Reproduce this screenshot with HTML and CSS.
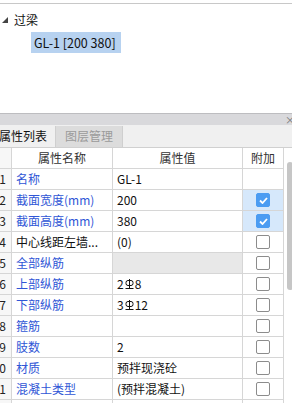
FILE: index.html
```html
<!DOCTYPE html>
<html lang="zh">
<head>
  <meta charset="UTF-8">
  <title>属性列表</title>
  <link rel="stylesheet" href="styles.css">
</head>
<body>

<!-- 构件树 -->
<div class="tree">
  <div class="node">
    <svg class="caret" width="6" height="6" viewBox="0 0 6 6"><polygon points="6,0 6,6 0,6" fill="#444"/></svg>
    <span>过梁</span>
  </div>
  <div class="leaf"><span class="sel">GL-1 [200 380]</span></div>
</div>

<div class="dockbar"><span class="close">×</span></div>

<div class="tabs">
  <div class="tab active">属性列表</div>
  <div class="tab">图层管理</div>
</div>

<!-- 属性表 -->
<div class="gridwrap">
  <div class="grid">
    <div class="row head">
      <div class="cell num"></div>
      <div class="cell c">属性名称</div>
      <div class="cell c">属性值</div>
      <div class="cell c">附加</div>
    </div>
    <div class="row">
      <div class="cell num">1</div>
      <div class="cell name">名称</div>
      <div class="cell">GL-1</div>
      <div class="cell add"></div>
    </div>
    <div class="row">
      <div class="cell num">2</div>
      <div class="cell name">截面宽度(mm)</div>
      <div class="cell">200</div>
      <div class="cell add on"><span class="box checked"><svg width="9" height="7" viewBox="0 0 9 7"><polyline points="1,3.5 3.5,6 8,1" fill="none" stroke="#fff" stroke-width="1.8"/></svg></span></div>
    </div>
    <div class="row">
      <div class="cell num">3</div>
      <div class="cell name">截面高度(mm)</div>
      <div class="cell">380</div>
      <div class="cell add on"><span class="box checked"><svg width="9" height="7" viewBox="0 0 9 7"><polyline points="1,3.5 3.5,6 8,1" fill="none" stroke="#fff" stroke-width="1.8"/></svg></span></div>
    </div>
    <div class="row">
      <div class="cell num">4</div>
      <div class="cell">中心线距左墙...</div>
      <div class="cell">(0)</div>
      <div class="cell add"><span class="box"></span></div>
    </div>
    <div class="row">
      <div class="cell num">5</div>
      <div class="cell name">全部纵筋</div>
      <div class="cell gray"></div>
      <div class="cell add"><span class="box"></span></div>
    </div>
    <div class="row">
      <div class="cell num">6</div>
      <div class="cell name">上部纵筋</div>
      <div class="cell">2<svg class="bar" width="9" height="11" viewBox="0 0 9 11"><rect x="1" y="1.5" width="7" height="5" rx="2" fill="none" stroke="#111"/><line x1="4.5" y1="0" x2="4.5" y2="10" stroke="#111"/><line x1="0.5" y1="9.5" x2="8.5" y2="9.5" stroke="#111"/></svg>8</div>
      <div class="cell add"><span class="box"></span></div>
    </div>
    <div class="row">
      <div class="cell num">7</div>
      <div class="cell name">下部纵筋</div>
      <div class="cell">3<svg class="bar" width="9" height="11" viewBox="0 0 9 11"><rect x="1" y="1.5" width="7" height="5" rx="2" fill="none" stroke="#111"/><line x1="4.5" y1="0" x2="4.5" y2="10" stroke="#111"/><line x1="0.5" y1="9.5" x2="8.5" y2="9.5" stroke="#111"/></svg>12</div>
      <div class="cell add"><span class="box"></span></div>
    </div>
    <div class="row">
      <div class="cell num">8</div>
      <div class="cell name">箍筋</div>
      <div class="cell"></div>
      <div class="cell add"><span class="box"></span></div>
    </div>
    <div class="row">
      <div class="cell num">9</div>
      <div class="cell name">肢数</div>
      <div class="cell">2</div>
      <div class="cell add"><span class="box"></span></div>
    </div>
    <div class="row">
      <div class="cell num">10</div>
      <div class="cell name">材质</div>
      <div class="cell">预拌现浇砼</div>
      <div class="cell add"><span class="box"></span></div>
    </div>
    <div class="row">
      <div class="cell num">11</div>
      <div class="cell name">混凝土类型</div>
      <div class="cell">(预拌混凝土)</div>
      <div class="cell add"><span class="box"></span></div>
    </div>
    <div class="row">
      <div class="cell num">12</div>
      <div class="cell name">混凝土强度等级</div>
      <div class="cell">(C20)</div>
      <div class="cell add"><span class="box"></span></div>
    </div>
  </div>
  <div class="scroll"><div class="thumb"></div></div>
</div>

</body>
</html>
```

FILE: styles.css
```css
html, body {
  margin: 0;
  padding: 0;
  width: 292px;
  height: 403px;
  overflow: hidden;
  background: #ffffff;
  font-family: "Noto Sans CJK SC", "Noto Sans", sans-serif;
  font-size: 12px;
  color: #111;
}

/* tree */
.tree {
  margin-top: 3px;
  border-top: 1px solid #c8c8c8;
  height: 109px;
}

.node {
  display: flex;
  align-items: center;
  height: 20px;
  margin-top: 5px;
  padding-left: 2px;
}

.caret {
  margin-right: 6px;
  margin-top: 2px;
}

.leaf {
  padding-left: 31px;
  margin-top: 3px;
}

.sel {
  display: inline-block;
  height: 21px;
  line-height: 21px;
  padding: 0 5px 0 3px;
  background: #b7d2f0;
  font-size: 12.5px;
}

/* dock header */
.dockbar {
  height: 11px;
  border-top: 1px solid #bdbdc0;
  background: #d9d9dc;
  display: flex;
  justify-content: flex-end;
  align-items: center;
  overflow: hidden;
}

.close {
  font-size: 10px;
  line-height: 10px;
  color: #777;
  margin-right: -3px;
}

/* tabs */
.tabs {
  height: 22px;
  background: #f0f0f0;
  display: flex;
  margin-left: -8px;
}

.tab {
  padding: 0 8px 0 7px;
  line-height: 22px;
  font-size: 12px;
  color: #111;
}

.tab + .tab {
  background: #dcdcdc;
  color: #9a9a9a;
  border-left: 1px solid #cfcfcf;
  border-right: 1px solid #cfcfcf;
  padding: 0 9px 0 9px;
  height: 21px;
  margin-top: 1px;
  line-height: 20px;
}

/* grid */
.gridwrap {
  display: flex;
  border-top: 1px solid #d0d0d0;
}

.grid {
  margin-left: -8px;
  width: 292px;
}

.row {
  display: grid;
  grid-template-columns: 20px 101px 130px 41px;
  height: 20px;
  border-bottom: 1px solid #d6d6d6;
}

.cell {
  border-right: 1px solid #d6d6d6;
  line-height: 20px;
  padding-left: 4px;
  white-space: nowrap;
  overflow: hidden;
  display: flex;
  align-items: center;
}

.cell.num {
  justify-content: flex-end;
  padding: 0 5px 0 0;
  background: #f7f7f7;
  color: #222;
}

.cell.c {
  justify-content: center;
  padding-left: 0;
  color: #333;
}

.name {
  color: #2f56d6;
}

.gray {
  background: #e8e8e8;
}

.add {
  justify-content: center;
  padding-left: 0;
}

.add.on {
  background: #d6e8fb;
}

.box {
  width: 12px;
  height: 12px;
  border: 1px solid #8c8c8c;
  border-radius: 2px;
  background: #fff;
  display: flex;
  align-items: center;
  justify-content: center;
}

.box.checked {
  border-color: #4b9cf2;
  background: #4b9cf2;
}

.bar {
  margin: 0 1px 0 1px;
}

.scroll {
  flex: 1;
  padding-top: 14px;
}

.thumb {
  width: 6px;
  height: 128px;
  margin-left: 3px;
  border-radius: 3px;
  background: #c6c6c6;
}
```
